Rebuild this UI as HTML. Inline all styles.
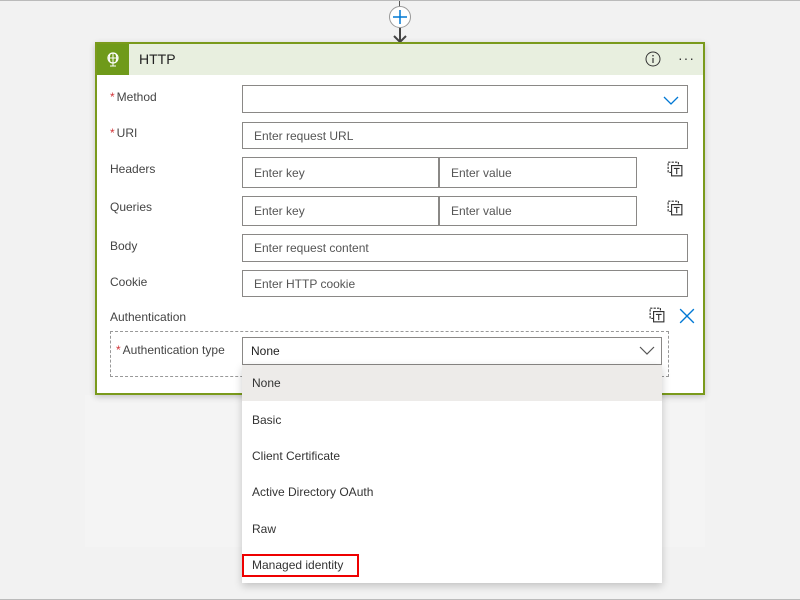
<!DOCTYPE html>
<html><head><style>
*{box-sizing:border-box;margin:0;padding:0}
body{width:800px;height:600px;background:#f2f2f2;font-family:"Liberation Sans",sans-serif;font-size:12px;color:#333;position:relative;overflow:hidden;border-top:1px solid #bbb;border-bottom:1px solid #bbb}
.a{position:absolute}
.inp{position:absolute;border:1px solid #8a8886;background:#fff;color:#555;padding-left:11px;display:flex;align-items:center;font-size:12px}
.lbl{position:absolute;left:110px;color:#444;font-size:12px}
.r{color:#d13438;margin-right:2px}
.item{position:absolute;left:0;width:420px;height:36px;padding-left:10px;display:flex;align-items:center;color:#333}
.ic{position:absolute;width:16px;height:16px}
</style></head><body>
<div class="a" style="left:85px;top:394px;width:620px;height:152px;background:#f4f4f4"></div>
<div class="a" style="left:399px;top:0;width:1px;height:6px;background:#555"></div>
<svg class="a" style="left:388px;top:4px" width="24" height="40"><circle cx="12" cy="12" r="10.5" fill="#fff" stroke="#999"/><path d="M12 5v14M5 12h14" stroke="#0078d4" stroke-width="1.5"/><path d="M12 23v14M6 31l6 6 6-6" stroke="#444" stroke-width="2" fill="none"/></svg>
<div class="a" style="left:95px;top:41px;width:610px;height:353px;border:2px solid #7a9a1c;background:#fff;box-shadow:0 2px 6px rgba(0,0,0,.2)"></div>
<div class="a" style="left:97px;top:43px;width:606px;height:31px;background:#e8efdf"></div>
<div class="a" style="left:97px;top:43px;width:32px;height:31px;background:#6f9a1a"></div>
<svg class="a" style="left:105px;top:50px" width="16" height="18"><circle cx="8" cy="7" r="5" fill="none" stroke="#fff" stroke-width="1.2"/><path d="M3 7h10M8 2v10M5 3.5q-1.5 3.5 0 7M11 3.5q1.5 3.5 0 7M8 12v3M5 15h6" stroke="#fff" fill="none"/></svg>
<div class="a" style="left:139px;top:50px;font-size:14px;color:#222">HTTP</div>
<svg class="a" style="left:645px;top:50px" width="16" height="16"><circle cx="8" cy="8" r="7" fill="none" stroke="#333"/><path d="M8 7v5" stroke="#333" stroke-width="1.2"/><circle cx="8" cy="4.7" r=".8" fill="#333"/></svg>
<div class="a" style="left:678px;top:49px;font-size:14px;color:#333;letter-spacing:1px">···</div>

<div class="lbl" style="top:89px"><span class="r">*</span>Method</div>
<div class="inp" style="left:242px;top:84px;width:446px;height:28px"></div>
<svg class="a" style="left:662px;top:93px" width="18" height="12"><path d="M2 3l7 7 7-7" stroke="#0078d4" stroke-width="1.3" fill="none"/></svg>
<div class="lbl" style="top:125px"><span class="r">*</span>URI</div>
<div class="inp" style="left:242px;top:121px;width:446px;height:27px">Enter request URL</div>
<div class="lbl" style="top:161px">Headers</div>
<div class="inp" style="left:242px;top:156px;width:197px;height:31px">Enter key</div>
<div class="inp" style="left:439px;top:156px;width:198px;height:31px">Enter value</div>
<div class="lbl" style="top:199px">Queries</div>
<div class="inp" style="left:242px;top:195px;width:197px;height:30px">Enter key</div>
<div class="inp" style="left:439px;top:195px;width:198px;height:30px">Enter value</div>
<div class="lbl" style="top:238px">Body</div>
<div class="inp" style="left:242px;top:233px;width:446px;height:28px">Enter request content</div>
<div class="lbl" style="top:274px">Cookie</div>
<div class="inp" style="left:242px;top:269px;width:446px;height:27px">Enter HTTP cookie</div>
<div class="lbl" style="top:309px">Authentication</div>

<svg class="ic" style="left:667px;top:160px" viewBox="0 0 14 14"><rect x="1" y="1" width="9" height="9" fill="none" stroke="#333" stroke-dasharray="2 1"/><rect x="4" y="4" width="9" height="9" fill="#fff" stroke="#333"/><path d="M6 6.5h5M8.5 6.5v5" stroke="#333"/></svg>
<svg class="ic" style="left:667px;top:199px" viewBox="0 0 14 14"><rect x="1" y="1" width="9" height="9" fill="none" stroke="#333" stroke-dasharray="2 1"/><rect x="4" y="4" width="9" height="9" fill="#fff" stroke="#333"/><path d="M6 6.5h5M8.5 6.5v5" stroke="#333"/></svg>
<svg class="ic" style="left:649px;top:306px" viewBox="0 0 14 14"><rect x="1" y="1" width="9" height="9" fill="none" stroke="#333" stroke-dasharray="2 1"/><rect x="4" y="4" width="9" height="9" fill="#fff" stroke="#333"/><path d="M6 6.5h5M8.5 6.5v5" stroke="#333"/></svg>
<svg class="ic" style="left:679px;top:307px" viewBox="0 0 14 14"><path d="M1 1l12 12M13 1L1 13" stroke="#0078d4" stroke-width="1.2"/></svg>

<div class="a" style="left:110px;top:330px;width:559px;height:46px;border:1px dashed #999"></div>
<div class="a" style="left:116px;top:342px;color:#444"><span class="r">*</span>Authentication type</div>
<div class="inp" style="left:242px;top:336px;width:420px;height:28px;color:#222;padding-left:8px">None</div>
<svg class="a" style="left:638px;top:343px" width="18" height="12"><path d="M2 3l7 7 7-7" stroke="#555" stroke-width="1.2" fill="none"/></svg>

<div class="a" style="left:242px;top:364px;width:420px;height:218px;background:#fff;box-shadow:0 3px 8px rgba(0,0,0,.2)">
<div class="item" style="top:0;background:#edebe9">None</div>
<div class="item" style="top:37px">Basic</div>
<div class="item" style="top:73px">Client Certificate</div>
<div class="item" style="top:109px">Active Directory OAuth</div>
<div class="item" style="top:146px">Raw</div>
<div class="item" style="top:182px">Managed identity</div>
</div>
<div class="a" style="left:242px;top:553px;width:117px;height:23px;border:2px solid #e00"></div>
</body></html>
